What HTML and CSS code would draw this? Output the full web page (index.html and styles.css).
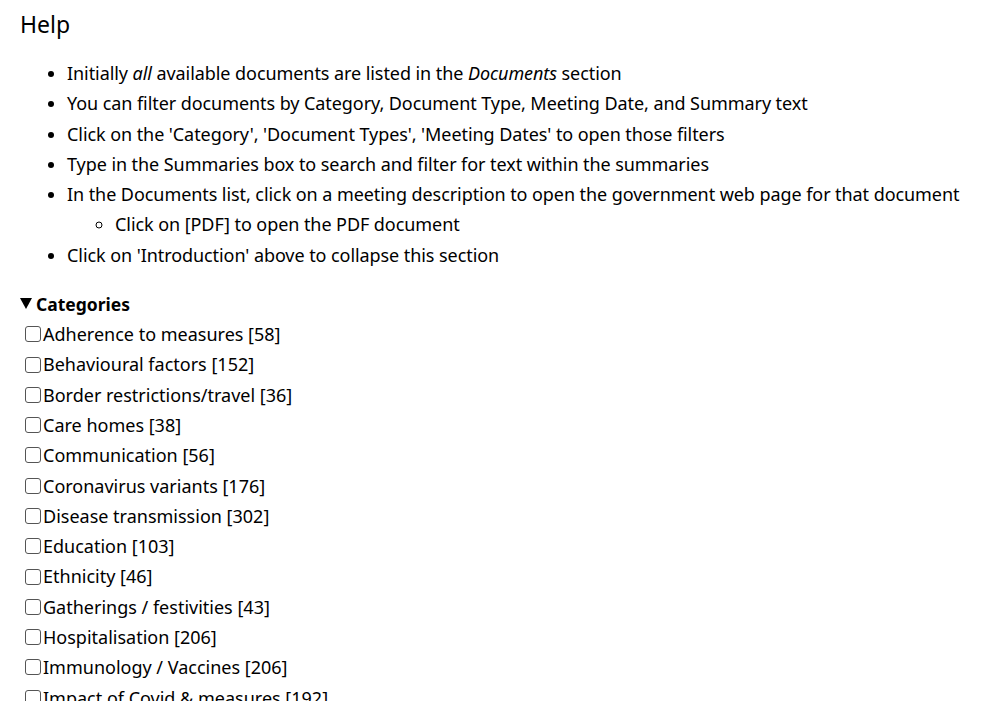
FILE: index.html
```html
<!DOCTYPE html>
<html>
<head>
  <title>Help</title>
  <link rel="stylesheet" href="styles.css">
</head>
<body>
  <div class="page">
    <h2 class="title">Help</h2>
    <ul class="help-list">
      <li>Initially <em>all</em> available documents are listed in the <em>Documents</em> section</li>
      <li>You can filter documents by Category, Document Type, Meeting Date, and Summary text</li>
      <li>Click on the 'Category', 'Document Types', 'Meeting Dates' to open those filters</li>
      <li>Type in the Summaries box to search and filter for text within the summaries</li>
      <li>In the Documents list, click on a meeting description to open the government web page for that document
        <ul class="sub-list">
          <li>Click on [PDF] to open the PDF document</li>
        </ul>
      </li>
      <li>Click on 'Introduction' above to collapse this section</li>
    </ul>

    <details class="filter" open>
      <summary>Categories</summary>
      <div class="options">
        <label class="option"><input type="checkbox">Adherence to measures [58]</label>
        <label class="option"><input type="checkbox">Behavioural factors [152]</label>
        <label class="option"><input type="checkbox">Border restrictions/travel [36]</label>
        <label class="option"><input type="checkbox">Care homes [38]</label>
        <label class="option"><input type="checkbox">Communication [56]</label>
        <label class="option"><input type="checkbox">Coronavirus variants [176]</label>
        <label class="option"><input type="checkbox">Disease transmission [302]</label>
        <label class="option"><input type="checkbox">Education [103]</label>
        <label class="option"><input type="checkbox">Ethnicity [46]</label>
        <label class="option"><input type="checkbox">Gatherings / festivities [43]</label>
        <label class="option"><input type="checkbox">Hospitalisation [206]</label>
        <label class="option"><input type="checkbox">Immunology / Vaccines [206]</label>
        <label class="option"><input type="checkbox">Impact of Covid &amp; measures [192]</label>
        <label class="option"><input type="checkbox">Modelling [250]</label>
      </div>
    </details>
  </div>
</body>
</html>
```

FILE: styles.css
```css
body {
  margin: 0;
  font-family: "Noto Sans", sans-serif;
  font-size: 18px;
  color: #000;
  background: #fff;
}

.page {
  padding: 8px 0 8px 20px;
}

.title {
  margin: 0;
  font-size: 23px;
  font-weight: normal;
  line-height: 32px;
}

.help-list {
  margin: 18px 0 0;
  padding-left: 47px;
  line-height: 30.3px;
  letter-spacing: -0.07px;
}

.sub-list {
  margin: 0;
  padding-left: 48px;
  list-style-type: circle;
}

.filter {
  margin-top: 19px;
}

.filter summary {
  display: flex;
  align-items: center;
  list-style: none;
  font-weight: bold;
  font-size: 17.5px;
  line-height: 30px;
  cursor: pointer;
}

.filter summary::-webkit-details-marker {
  display: none;
}

/* disclosure triangle */
.filter summary::before {
  content: "";
  width: 0;
  height: 0;
  margin: 0 4px 2px 0;
  border-left: 6px solid transparent;
  border-right: 6px solid transparent;
  border-top: 11px solid #000;
}

.options {
  line-height: 30.3px;
}

.option {
  display: flex;
  align-items: center;
  padding-left: 5px;
}

.option input {
  appearance: none;
  box-sizing: border-box;
  width: 16px;
  height: 16px;
  margin: 0 2px 0 0;
  border: 1.4px solid #555;
  border-radius: 3px;
  background: #fff;
}
```
